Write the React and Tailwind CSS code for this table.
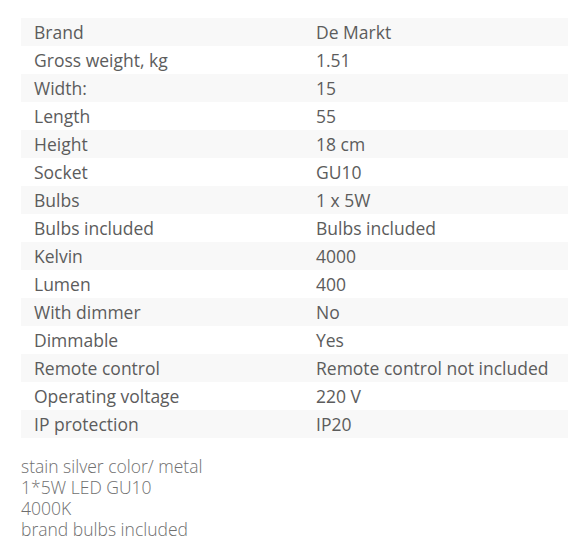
import React from 'react';

const specs = [
  ['Brand', 'De Markt'],
  ['Gross weight, kg', '1.51'],
  ['Width:', '15'],
  ['Length', '55'],
  ['Height', '18 cm'],
  ['Socket', 'GU10'],
  ['Bulbs', '1 x 5W'],
  ['Bulbs included', 'Bulbs included'],
  ['Kelvin', '4000'],
  ['Lumen', '400'],
  ['With dimmer', 'No'],
  ['Dimmable', 'Yes'],
  ['Remote control', 'Remote control not included'],
  ['Operating voltage', '220 V'],
  ['IP protection', 'IP20'],
];

const description = [
  'stain silver color/ metal',
  '1*5W LED GU10',
  '4000K',
  'brand bulbs included',
];

export default function App() {
  return (
    <div className="w-[568px] h-[549px] overflow-hidden bg-white font-['Open_Sans',sans-serif]">
      <div className="pt-[18px] pl-[21px]">
        <div className="w-[564px]">
          {specs.map(([label, value], i) => (
            <div
              key={label}
              className={`grid grid-cols-[282px_282px] h-[28px] items-center text-[17.5px] text-[#5c5c5c] ${
                i % 2 === 0 ? 'bg-[#f8f8f8]' : 'bg-white'
              }`}
            >
              <div className="pl-[13px]">{label}</div>
              <div className="pl-[13px]">{value}</div>
            </div>
          ))}
        </div>
        <div className="mt-[18px] text-[17.5px] leading-[21px] font-light text-[#6f6f6f]">
          {description.map((line) => (
            <div key={line}>{line}</div>
          ))}
        </div>
      </div>
    </div>
  );
}
